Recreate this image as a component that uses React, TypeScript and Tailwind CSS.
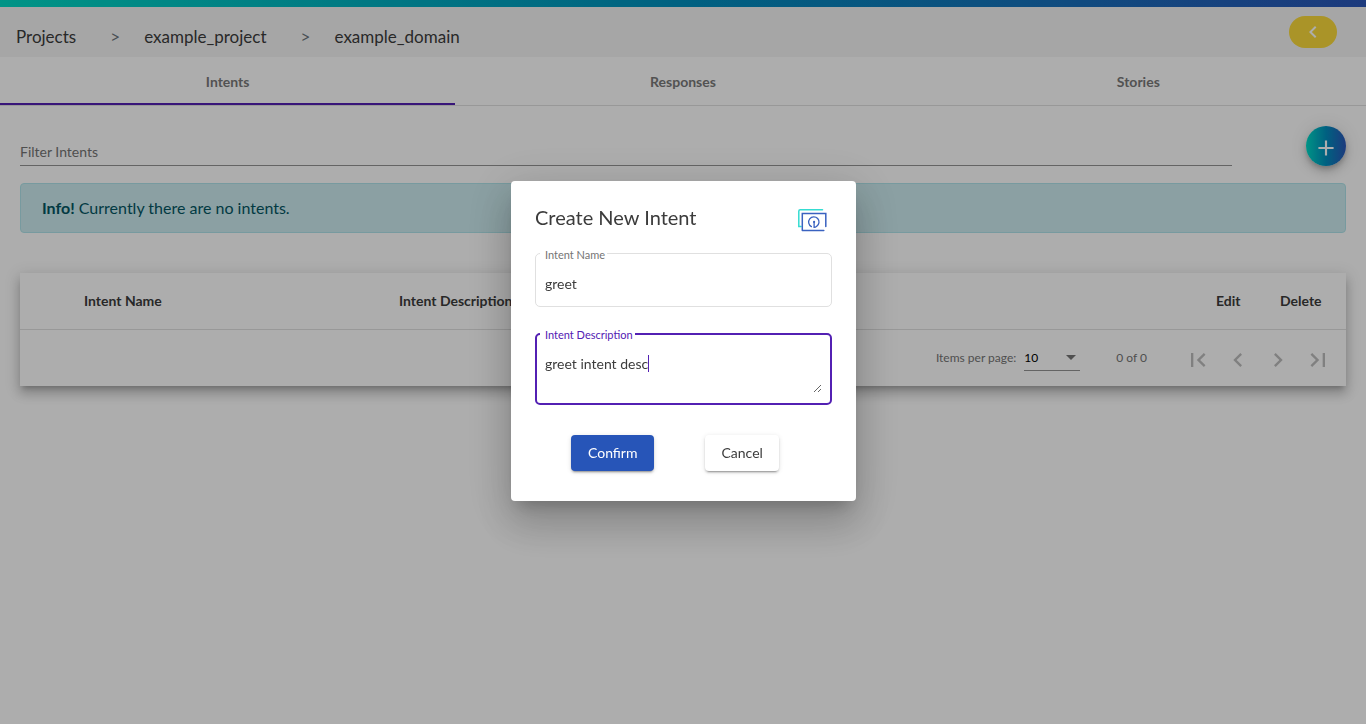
import React from "react";

const pageIcons: { label: string; d: string }[] = [
  { label: "First page", d: "M18.41 16.59L13.82 12l4.59-4.59L17 6l-6 6 6 6zM6 6h2v12H6z" },
  { label: "Previous page", d: "M15.41 7.41L14 6l-6 6 6 6 1.41-1.41L10.83 12z" },
  { label: "Next page", d: "M10 6L8.59 7.41 13.17 12l-4.58 4.59L10 18l6-6z" },
  { label: "Last page", d: "M5.59 7.41L10.18 12l-4.59 4.59L7 18l6-6-6-6zM16 6h2v12h-2z" },
];

const tabs = ["Intents", "Responses", "Stories"];

function Header() {
  return (
    <header className="border-t-[7px] border-transparent bg-[linear-gradient(to_right,#00dac6,#008fbe,#2b56b9)] bg-origin-border">
      <div className="flex h-[50px] items-start justify-between bg-[#f5f5f5] pl-4 pr-[29px]">
        <nav className="flex h-[60px] items-center text-[17px] leading-6 text-[#3c3c3c]">
          <a href="#projects">Projects</a>
          <span className="w-[68px] pl-[34px] text-[#6c757d]">&gt;</span>
          <a href="#project">example_project</a>
          <span className="w-[68px] pl-[34px] text-[#6c757d]">&gt;</span>
          <a href="#domain">example_domain</a>
        </nav>
        <button aria-label="Back" className="mt-[9px] flex h-8 w-12 items-center justify-center rounded-2xl bg-[#fbdb3c] text-white">
          <svg viewBox="0 0 24 24" className="size-6" fill="currentColor">
            <path d="M15.41 7.41L14 6l-6 6 6 6 1.41-1.41L10.83 12z" />
          </svg>
        </button>
      </div>
    </header>
  );
}

function IntentsTable() {
  return (
    <section className="mt-10 bg-white shadow-[0_5px_5px_-3px_rgba(0,0,0,0.2),0_8px_10px_1px_rgba(0,0,0,0.14),0_3px_14px_2px_rgba(0,0,0,0.12)]">
      <table className="w-full table-fixed border-separate border-spacing-0 text-left text-sm text-[#3c3c3c]">
        <thead>
          <tr className="h-[57px]">
            <th className="w-[379px] border-b border-[#e0e0e0] pl-16 font-bold">Intent Name</th>
            <th className="border-b border-[#e0e0e0] font-bold">Intent Description</th>
            <th className="w-16 border-b border-[#e0e0e0] font-bold">Edit</th>
            <th className="w-[66px] border-b border-[#e0e0e0] font-bold">Delete</th>
          </tr>
        </thead>
      </table>
      <div className="flex h-14 items-center justify-end pr-2 text-xs text-[#757575]">
        <label htmlFor="page-size">Items per page:</label>
        <div className="relative ml-2 mr-9 w-14 border-b border-[#949494]">
          <select id="page-size" defaultValue="10" className="h-6 w-full appearance-none bg-transparent text-xs text-black outline-none">
            <option>10</option>
          </select>
          <svg viewBox="0 0 10 5" className="pointer-events-none absolute right-1 top-[9px] h-[5px] w-[10px]" fill="#757575">
            <path d="M0 0h10L5 5z" />
          </svg>
        </div>
        <span className="mr-[31px]">0 of 0</span>
        <div className="flex pt-1">
          {pageIcons.map((icon) => (
            <button key={icon.label} aria-label={icon.label} disabled className="flex size-10 items-center justify-center text-[#bdbdbd]">
              <svg viewBox="0 0 24 24" className="size-7" fill="currentColor">
                <path d={icon.d} />
              </svg>
            </button>
          ))}
        </div>
      </div>
    </section>
  );
}

function CardsLogo() {
  return (
    <svg viewBox="0 0 30 24" className="mt-1 h-6 w-[30px]" fill="none" strokeLinecap="round" strokeWidth="1.5">
      <path d="M25.5 1.8H3.2Q1.8 1.8 1.8 3.2V18.5H4" stroke="#35dcd2" />
      <path d="M5.3 22.3V5.6H28.8V18.5M5.3 22.6H26.8" stroke="#3a62c0" />
      <path d="M14.4 18.6A5.2 5.2 0 1 1 19.6 18.4Q18.6 19.4 17.1 19.4V14.2" stroke="#3a62c0" strokeWidth="1.3" />
      <circle cx="17.1" cy="13.9" r="1.1" fill="#3a62c0" />
    </svg>
  );
}

function IntentDialog() {
  return (
    <div className="fixed inset-0 flex items-center justify-center bg-black/32 pb-[42px] pl-px">
      <form
        role="dialog"
        aria-labelledby="dialog-title"
        onSubmit={(e) => e.preventDefault()}
        className="w-[345px] rounded bg-white px-6 pb-[30px] pt-[23px] text-[#3c3c3c] shadow-[0_11px_15px_-7px_rgba(0,0,0,0.2),0_24px_38px_3px_rgba(0,0,0,0.14),0_9px_46px_8px_rgba(0,0,0,0.12)]"
      >
        <div className="flex h-[49px] items-start justify-between pr-[5px]">
          <h2 id="dialog-title" className="text-xl leading-[26px]">Create New Intent</h2>
          <CardsLogo />
        </div>
        <div className="relative h-[54px] rounded-[5px] border border-[#e0e0e0] px-[9px] pt-5">
          <label htmlFor="intent-name" className="absolute -top-[7px] left-1 bg-white pl-[5px] pr-0.5 text-[11px] leading-4 text-[#757575]">
            Intent Name
          </label>
          <input id="intent-name" defaultValue="greet" className="block h-5 w-full text-sm leading-5 outline-none" />
        </div>
        <div className="relative mt-[26px] h-[72px] rounded-[5px] border-2 border-[#5320b3] px-2 pt-[19px]">
          <label htmlFor="intent-description" className="absolute -top-2 left-[3px] bg-white pl-[5px] pr-0.5 text-[11px] leading-4 text-[#5320b3]">
            Intent Description
          </label>
          <textarea
            id="intent-description"
            autoFocus
            defaultValue="greet intent desc"
            className="block h-[39px] w-full resize-y text-sm leading-5 caret-transparent outline-none"
          />
          <span aria-hidden="true" className="pointer-events-none absolute left-[111px] top-5 h-[17px] w-px bg-[#5320b3]" />
        </div>
        <div className="mt-[30px] flex gap-[51px] pl-9">
          <button className="h-9 rounded bg-[#2755b8] px-[17px] text-sm text-white shadow-[0_3px_1px_-2px_rgba(0,0,0,0.2),0_2px_2px_0_rgba(0,0,0,0.14),0_1px_5px_0_rgba(0,0,0,0.12)]">
            Confirm
          </button>
          <button type="button" className="h-9 rounded bg-white px-4 text-sm shadow-[0_3px_1px_-2px_rgba(0,0,0,0.2),0_2px_2px_0_rgba(0,0,0,0.14),0_1px_5px_0_rgba(0,0,0,0.12)]">
            Cancel
          </button>
        </div>
      </form>
    </div>
  );
}

export default function App() {
  return (
    <div className="min-h-screen bg-white font-['Lato',sans-serif]">
      <Header />
      <div role="tablist" className="grid h-[49px] grid-cols-3 border-b border-[#e0e0e0]">
        {tabs.map((tab, i) => (
          <button
            key={tab}
            role="tab"
            aria-selected={i === 0}
            className="border-b-2 border-transparent pt-1 text-sm font-bold text-[#7a7a7a] aria-selected:border-[#5320b3]"
          >
            {tab}
          </button>
        ))}
      </div>
      <main className="px-5 pt-5">
        <div className="flex items-start justify-between gap-[74px]">
          <input
            aria-label="Filter Intents"
            placeholder="Filter Intents"
            className="h-10 flex-1 border-b border-[#949494] pt-3 text-sm text-[#3c3c3c] outline-none placeholder:text-[#757575]"
          />
          <button
            aria-label="Add intent"
            className="flex size-10 items-center justify-center rounded-full bg-[linear-gradient(to_right,#00dac6,#008fbe,#2b56b9)] pt-1 text-white shadow-[0_3px_5px_-1px_rgba(0,0,0,0.2),0_6px_10px_0_rgba(0,0,0,0.14),0_1px_18px_0_rgba(0,0,0,0.12)]"
          >
            <svg viewBox="0 0 24 24" className="size-[26px]" fill="currentColor">
              <path d="M19 13h-6v6h-2v-6H5v-2h6V5h2v6h6z" />
            </svg>
          </button>
        </div>
        <div role="alert" className="mt-[17px] rounded border border-[#b0e4ea] bg-[#cdecf0] px-[21px] py-3 text-base leading-6 text-[#045663]">
          <strong>Info!</strong> Currently there are no intents.
        </div>
        <IntentsTable />
      </main>
      <IntentDialog />
    </div>
  );
}
